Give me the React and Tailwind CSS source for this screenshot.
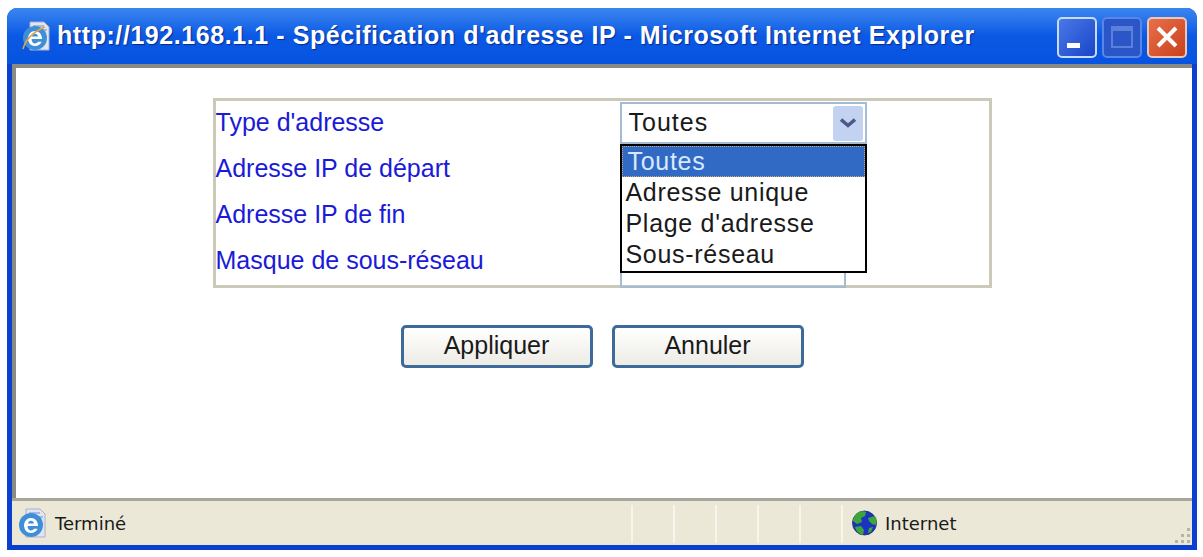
const OPTIONS = ['Toutes', 'Adresse unique', "Plage d'adresse", 'Sous-réseau'];
const LABELS = ["Type d'adresse", 'Adresse IP de départ', 'Adresse IP de fin', 'Masque de sous-réseau'];
const SEPARATORS = [42, 42, 42, 42, 42, 11];

function IeIcon({ page = false, size = 30 }) {
  return (
    <svg width={size} height={size} viewBox="0 0 30 30" className="shrink-0">
      <path d="M9 1h14l5 5v23H9z" fill="#e2e4f0" stroke="#a8b0cc" strokeWidth="1" />
      <path d="M12 5h11M20 9h6" stroke="#a8b8e0" strokeWidth="2" />
      <circle cx="14" cy="17" r="12" fill="#3f8fd8" />
      <path d="M7 18h14c0-5-3-8-7-8s-7 3-7 8z" fill="#fff" />
      <path d="M11 15.500c.3-1.800 1.500-2.800 3-2.800s2.700 1 3 2.800z" fill="#3f8fd8" />
      <path d="M7 17c0 5 3 8 7 8 3.200 0 5.600-1.600 6.600-4.200h-3.700c-.6 1.200-1.600 1.700-2.900 1.700-2 0-3.400-1.700-3.400-4.500z" fill="#fff" />
      {page ? <path d="M2 28c2-8 9-17 22-22" stroke="#e4a63c" strokeWidth="1.500" fill="none" /> : null}
    </svg>
  );
}

function Globe() {
  return (
    <svg width="25" height="26" viewBox="0 0 25 26" className="shrink-0">
      <circle cx="12.500" cy="13" r="12" fill="#1a34c0" stroke="#1a2a70" strokeWidth="0.800" />
      <path d="M5 3c3-2 7-2.500 9-1l-1 4-4 2 1 4-5 2-4-3c0-3 2-6 4-8zM16 8l7-2c2 3 2 6 1 9l-4-1-3-3zM3 17l6-1 3 4-1 5c-4-1-7-4-8-8zM17 18l4-1-2 5-3 1z" fill="#3fa53a" />
    </svg>
  );
}

function TitleButton({ className, children }) {
  return (
    <div className={`w-[40px] h-[41px] rounded-[5px] border-2 flex items-center justify-center relative ${className}`}>
      {children}
    </div>
  );
}

function DialogButton({ label }) {
  return (
    <button className="w-[192px] h-[43px] rounded-[5px] border-[3px] border-[#3d6a9a] bg-gradient-to-b from-white to-[#ecebe4] text-[25px] text-[#1a1a1a] leading-none pb-[3px]">
      {label}
    </button>
  );
}

export default function App() {
  return (
    <div className="w-[1203px] h-[557px] bg-white pt-2 pl-[7px] pr-[6px] overflow-hidden font-['Liberation_Sans',sans-serif]">
      <div className="h-[542px] rounded-t-[10px] bg-[#0a50dc] flex flex-col border-r-[5px] border-b-[5px] border-l-[5px] border-[#0a3fd0]">
        {/* title bar */}
        <div className="h-[56px] shrink-0 -mx-[5px] rounded-t-[10px] bg-gradient-to-b from-[#3a86f0] via-[#0a58e4] to-[#0654e0] flex items-center pl-[14px] pr-[10px]">
          <IeIcon page size={30} />
          <div className="ml-[6px] flex-1 text-white font-bold text-[25px] tracking-[0.57px] whitespace-nowrap [text-shadow:1px_1px_1px_#0a2a90]">
            http://192.168.1.1 - Spécification d'adresse IP - Microsoft Internet Explorer
          </div>
          <div className="flex gap-[5px] mt-[2px]">
            <TitleButton className="border-[#c8dcf8] bg-gradient-to-br from-[#4a78e8] to-[#1a44c8]">
              <div className="absolute left-[8px] bottom-[8px] w-[13px] h-[5px] bg-white" />
            </TitleButton>
            <TitleButton className="border-[#5a86e8] bg-[#2a56c8]">
              <div className="w-[22px] h-[22px] border-2 border-t-[5px] border-[#5a80dc]" />
            </TitleButton>
            <TitleButton className="border-[#e8c8b8] bg-gradient-to-br from-[#e8704a] to-[#c8401a]">
              <svg width="24" height="24" viewBox="0 0 24 24"><path d="M3 3l18 18M21 3L3 21" stroke="#fff" strokeWidth="4" /></svg>
            </TitleButton>
          </div>
        </div>

        {/* page */}
        <div className="flex-1 bg-white border-l-[4px] border-t-[4px] border-[#8a8a84] flex flex-col items-center pt-[30px] min-h-0">
          <div className="w-[779px] h-[190px] border-[3px] border-[#cdc9b8] pt-[2px] grid grid-cols-[404px_1fr] grid-rows-[46px_46px_46px_46px] ml-[-4px] relative shrink-0">
            {LABELS.map((label, i) => (
              <div key={label} className="col-start-1 flex items-center text-[25px] text-[#1a1ad8] -mt-[7px]" style={{ gridRowStart: i + 1 }}>
                {label}
              </div>
            ))}
            <div className="col-start-2 row-start-1 w-[247px] h-[42px] -mt-[1px] border-2 border-[#a3bcd4] flex items-center justify-between pl-[7px] pr-[2px] text-[25px] tracking-[1px] text-[#1a1a1a]">
              Toutes
              <div className="w-[30px] h-[35px] rounded-[3px] bg-[#c4d2f2] flex items-center justify-center">
                <svg width="16" height="12" viewBox="0 0 16 12"><path d="M1 2.500l7 6 7-6" stroke="#4a5a88" strokeWidth="3.500" fill="none" /></svg>
              </div>
            </div>
            <div className="col-start-2 row-start-4 w-[226px] h-[43px] self-end border-2 border-[#a3bcd4] -mb-[1px]" />

            {/* open dropdown list */}
            <div className="absolute left-[404px] top-[43px] w-[247px] h-[129px] bg-white border-2 border-black z-10 text-[25px] tracking-[0.7px] leading-[31px] text-[#1a1a1a]">
              {OPTIONS.map((opt, i) => (
                <div key={opt} className={i === 0 ? 'h-[31px] pl-[6px] bg-[#316ac5] text-[#d8e8ff] outline-1 outline-dotted -outline-offset-1 outline-[#c8a878]' : 'h-[31px] pl-[4px]'}>
                  {opt}
                </div>
              ))}
            </div>
          </div>

          <div className="flex gap-[19px] mt-[37px] ml-[-4px]">
            <DialogButton label="Appliquer" />
            <DialogButton label="Annuler" />
          </div>
        </div>

        {/* status bar */}
        <div className="h-[47px] shrink-0 bg-[#ebe8d8] border-t-[3px] border-[#a8a698] flex items-center pl-[5px] text-[#1a1a1a] relative">
          <IeIcon size={30} />
          <span className="ml-[8px] flex-1 font-['DejaVu_Sans',sans-serif] text-[18px]">Terminé</span>
          <div className="flex self-stretch pt-[4px] pb-[2px]">
            {SEPARATORS.map((w, i) => (
              <div key={i} className="border-l-2 border-[#f8f6ec]" style={{ width: w }} />
            ))}
          </div>
          <div className="w-[340px] flex items-center">
            <Globe />
            <span className="ml-[8px] font-['DejaVu_Sans',sans-serif] text-[18px]">Internet</span>
          </div>
          <div className="absolute right-[2px] bottom-[2px] grid grid-cols-3 gap-[3px]">
            {['', '', 'a', '', 'a', 'a', 'a', 'a', 'a'].map((v, i) => (
              <div key={i} className={v ? 'w-[3px] h-[3px] bg-[#b8b4a4]' : 'w-[3px] h-[3px]'} />
            ))}
          </div>
        </div>
      </div>
    </div>
  );
}
